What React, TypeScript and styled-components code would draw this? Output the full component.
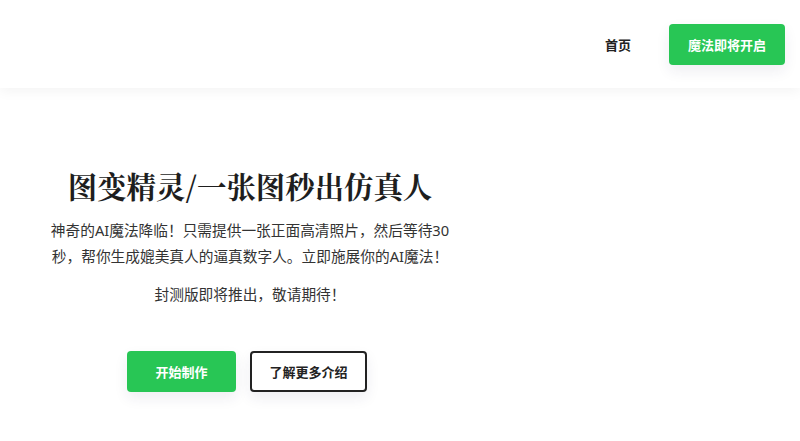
import styled, { createGlobalStyle } from "styled-components";

const GlobalStyle = createGlobalStyle`
  html, body {
    margin: 0;
    padding: 0;
    background: #fff;
  }
  body {
    font-family: "Noto Sans", "Noto Sans CJK SC", sans-serif;
    color: #333;
  }
  * {
    box-sizing: border-box;
  }
`;

const Page = styled.div`
  width: 100%;
  min-height: 441px;
  background: #fff;
`;

const Header = styled.header`
  height: 88px;
  display: flex;
  align-items: center;
  justify-content: flex-end;
  padding-right: 15px;
  background: #fff;
  box-shadow: 0 3px 12px rgba(0, 0, 0, 0.05);
  position: relative;
  z-index: 1;
`;

const NavLink = styled.a`
  font-size: 13px;
  font-weight: 700;
  color: #222;
  text-decoration: none;
  margin-right: 38px;
`;

const Button = styled.button<{ $outline?: boolean; $w: number }>`
  width: ${(p) => p.$w}px;
  height: 41px;
  padding: 0;
  white-space: nowrap;
  border-radius: 4px;
  font-family: "Noto Sans", "Noto Sans CJK SC", sans-serif;
  font-size: 13px;
  font-weight: 700;
  cursor: pointer;
  border: ${(p) => (p.$outline ? "2px solid #222" : "none")};
  background: ${(p) => (p.$outline ? "#fff" : "#28c655")};
  color: ${(p) => (p.$outline ? "#222" : "#fff")};
  box-shadow: 0 6px 14px rgba(40, 40, 90, 0.08);
`;

const Hero = styled.main`
  padding: 80px 0 0 48px;
`;

const Column = styled.div`
  width: 404px;
  display: flex;
  flex-direction: column;
  align-items: center;
  text-align: center;
`;

const Title = styled.h1`
  margin: 0 0 14px;
  font-family: "Noto Serif CJK SC", "Noto Sans CJK SC", serif;
  font-size: 29.4px;
  line-height: 35px;
  font-weight: 700;
  color: #1e1e1e;
`;

const Lead = styled.p`
  margin: 0 0 13px;
  font-size: 14.7px;
  line-height: 26px;
  color: #333;
  white-space: nowrap;
`;

const Note = styled.p`
  margin: 0 0 45px;
  font-size: 14.7px;
  line-height: 24px;
  color: #333;
`;

const Actions = styled.div`
  display: flex;
  gap: 14px;
  margin-right: 6px;
`;

export default function App() {
  return (
    <Page>
      <GlobalStyle />
      <Header>
        <NavLink href="#">首页</NavLink>
        <Button $w={116}>魔法即将开启</Button>
      </Header>
      <Hero>
        <Column>
          <Title>图变精灵/一张图秒出仿真人</Title>
          <Lead>
            神奇的AI魔法降临！只需提供一张正面高清照片，然后等待30
            <br />
            秒，帮你生成媲美真人的逼真数字人。立即施展你的AI魔法！
          </Lead>
          <Note>封测版即将推出，敬请期待！</Note>
          <Actions>
            <Button $w={109}>开始制作</Button>
            <Button $outline $w={117}>
              了解更多介绍
            </Button>
          </Actions>
        </Column>
      </Hero>
    </Page>
  );
}
